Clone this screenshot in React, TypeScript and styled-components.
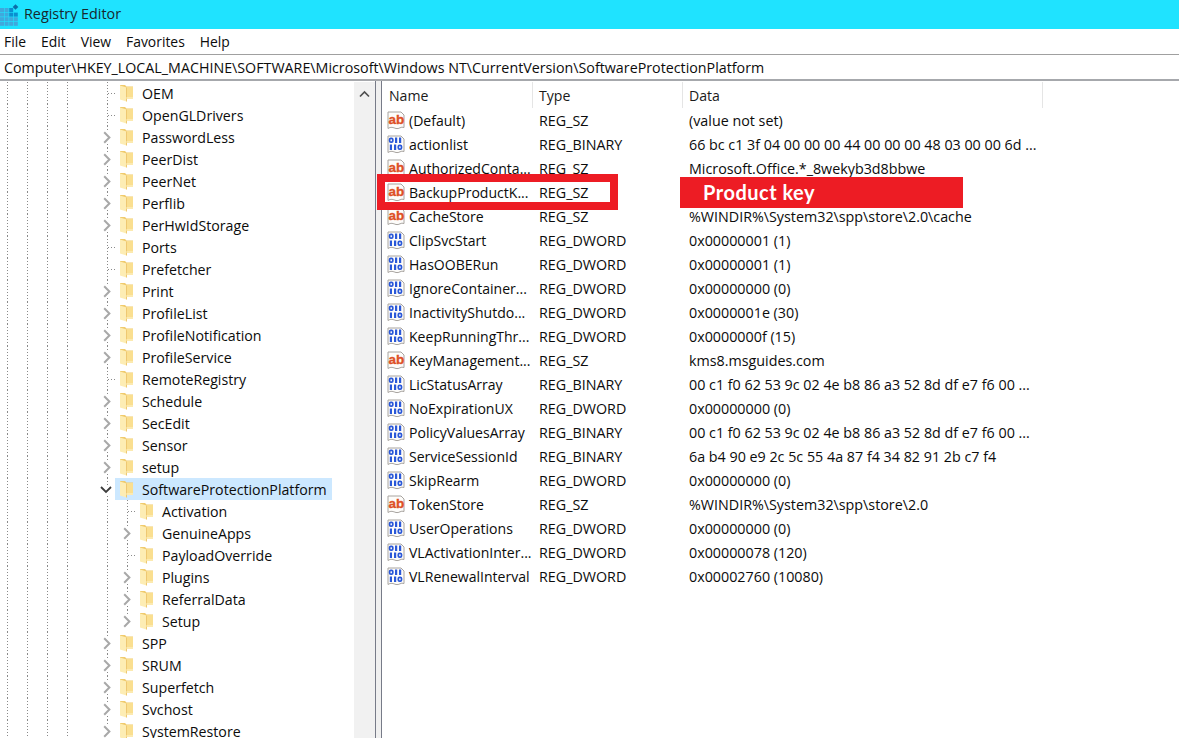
import React from "react";
import styled, { createGlobalStyle } from "styled-components";

const Global = createGlobalStyle`
  html, body { margin: 0; padding: 0; background: #fff; overflow: hidden; }
  * { box-sizing: border-box; }
`;

const FONT = `"Open Sans", "Noto Sans", "Liberation Sans", sans-serif`;

const Win = styled.div`
  width: 1179px; height: 738px; display: flex; flex-direction: column; overflow: hidden;
  font-family: ${FONT}; font-size: 14.3px; color: #0c0c0c; background: #fff; position: relative;
`;
const TitleBar = styled.div`
  height: 29px; flex: none; background: #1fe3ff; display: flex; align-items: center; gap: 5px;
`;
const TitleText = styled.span`font-size: 14.35px; color: #17282e; padding-bottom: 3px;`;
const MenuBar = styled.div`
  height: 26px; flex: none; display: flex; align-items: center; padding-left: 4px; gap: 15px;
  font-size: 13.9px; border-bottom: 1px solid #a0a0a0;
`;
const MenuItem = styled.span``;
const AddressBar = styled.div`
  height: 26px; flex: none; display: flex; align-items: center; padding: 1px 0 0 4px;
  font-size: 14.28px; border-bottom: 2px solid #a6a8ac; white-space: nowrap;
`;
const Panes = styled.div`flex: 1; min-height: 0; display: flex;`;
const TreePane = styled.div`width: 354px; flex: none; overflow: hidden; padding-top: 1px; font-size: 14.2px;`;
const Scrollbar = styled.div`
  width: 21px; flex: none; background: #f1f1f1; display: flex; justify-content: center;
  padding-top: 8px; margin-top: 1px;
`;
const Splitter = styled.div`
  width: 7px; flex: none; background: #f0f0f0; border-left: 1px solid #777b88; border-right: 1px solid #777b88;
`;
const ListPane = styled.div`flex: 1; min-width: 0; position: relative; padding-left: 1px;`;

const TreeRow = styled.div`height: 22px; display: flex; align-items: stretch; padding-left: 7px; white-space: nowrap;`;
const dots = `repeating-linear-gradient(to bottom, #8a8a8a 0 1px, transparent 1px 3px)`;
const hdots = `repeating-linear-gradient(to right, #8a8a8a 0 1px, transparent 1px 3px)`;
const Guide = styled.div`width: 20px; flex: none; background: ${dots} 0 0 / 1px 100% no-repeat;`;
const GuideGap = styled.div`width: 10px; flex: none;`;
const ChildGuide = styled.div`width: 20px; flex: none; background: ${dots} 10px 0 / 1px 100% no-repeat;`;
const Toggle = styled.div<{ $stub: boolean; $last: boolean }>`
  width: 18px; flex: none; display: flex; align-items: center; padding-left: 6px;
  background:
    ${dots} 10px 0 / 1px ${(p) => (p.$last ? "50%" : "100%")} no-repeat
    ${(p) => (p.$stub ? `, ${hdots} 11px 11px / 8px 1px no-repeat` : "")};
`;
const Entry = styled.div<{ $selected: boolean }>`
  display: flex; align-items: center; gap: 9px; padding: 0 5px; flex: none;
  background: ${(p) => (p.$selected ? "#cce8ff" : "transparent")};
`;
const ChevronBox = styled.svg`display: block; background: #fff; flex: none;`;

const Header = styled.div`height: 27px; display: flex; padding-top: 1px;`;
const HeadCell = styled.div<{ $w: number }>`
  width: ${(p) => p.$w}px; flex: none; border-right: 1px solid #e5e5e5; padding-left: 6px;
  display: flex; align-items: center; font-size: 14.1px; padding-top: 1px; color: #1a1a1a;
`;
const DataRow = styled.div`height: 24px; display: flex; align-items: center; white-space: nowrap; padding-top: 1px;`;
const NameCell = styled.div`
  width: 150px; flex: none; display: flex; align-items: center; gap: 4px; padding-left: 4px; font-size: 14.05px;
`;
const TypeCell = styled.div`width: 150px; flex: none; padding-left: 6px;`;
const DataCell = styled.div`flex: 1; padding-left: 6px;`;
const Outline = styled.div`
  position: absolute; left: -5px; top: 93px; width: 241px; height: 36px; border: 8px solid #ed1c24;
`;
const Banner = styled.div`
  position: absolute; left: 298px; top: 96px; width: 283px; height: 31px; background: #ed1c24; color: #fff;
  font-family: "Lato", "Open Sans", sans-serif; font-weight: 700; font-size: 20px; letter-spacing: 0.5px;
  display: flex; align-items: center; padding: 0 0 2px 23px;
`;
const IconText = styled.text`
  font-family: "Liberation Sans", sans-serif; font-weight: 700; font-size: 13.5px;
  stroke: #dd5026; stroke-width: 0.35px;
`;

const Folder = () => (
  <svg width="13" height="18" viewBox="0 0 13 18" style={{ display: "block", flex: "none" }}>
    <path d="M0 1 H5 L6.5 2.5 H13 V15 H0 Z" fill="#f0cb6e" />
    <path d="M6.5 3 H13 V15 H6.5 Z" fill="#fadf90" />
    <path d="M0 1.5 L6.5 3.5 V17.5 L0 15.5 Z" fill="#fdedb4" />
    <path d="M6.5 3.5 V17.5" stroke="#eec872" strokeWidth="1" />
    <path d="M6.5 13 H13 V15 H6.5 Z" fill="#fceab0" />
  </svg>
);

const Chevron = ({ open }: { open?: boolean }) =>
  open ? (
    <ChevronBox width="12" height="9" viewBox="0 0 12 9" style={{ marginLeft: -3 }}>
      <path d="M1 2 L6 7 L11 2" fill="none" stroke="#3c3c3c" strokeWidth="1.8" />
    </ChevronBox>
  ) : (
    <ChevronBox width="8" height="13" viewBox="0 0 8 13">
      <path d="M1.2 1.2 L6.4 6.5 L1.2 11.8" fill="none" stroke="#a8a8a8" strokeWidth="2" />
    </ChevronBox>
  );

const Page = ({ children }: { children: React.ReactNode }) => (
  <svg width="18" height="19" viewBox="0 0 18 19" style={{ display: "block", flex: "none" }}>
    <path d="M1 1 H14 L17 4 V16.5 C14 15 12 18.5 9 17.5 C6 16.5 4 15.5 1 17.5 Z" fill="#fdfcfa" stroke="#a8a4a0" />
    {children}
  </svg>
);
const AbIcon = () => (
  <Page>
    <IconText x="1.6" y="12.5" fill="#dd5026">ab</IconText>
  </Page>
);
const Bit = ({ x, y, one }: { x: number; y: number; one?: boolean }) =>
  one ? (
    <rect x={x + 1} y={y} width="2.2" height="5.5" fill="#2a58d8" />
  ) : (
    <rect x={x + 0.8} y={y + 0.8} width="3.2" height="3.9" rx="1.3" fill="none" stroke="#2a58d8" strokeWidth="1.7" />
  );
const BinIcon = () => (
  <Page>
    <Bit x={1.8} y={2.5} />
    <Bit x={7} y={2.5} one />
    <Bit x={11} y={2.5} one />
    <Bit x={1.8} y={9.5} one />
    <Bit x={6} y={9.5} one />
    <Bit x={10.5} y={9.5} />
  </Page>
);

const RegIcon = () => (
  <svg width="20" height="22" viewBox="0 0 20 22" style={{ display: "block", flex: "none", marginLeft: -1 }}>
    {[0, 1, 2, 3].map((r) =>
      [0, 1, 2, 3].map((c) =>
        r === 0 && c === 3 ? null : (
          <rect key={`${r}${c}`} x={c * 4.6 + 1} y={r * 4.6 + 4} width="4" height="4" fill={c > 1 && r < 2 ? "#0a8fd0" : "#3fa9dd"} />
        ),
      ),
    )}
    <rect x="14.5" y="1" width="4" height="4" fill="#0d6ea8" transform="rotate(45 16.5 3)" />
  </svg>
);

type T = { name: string; kind?: "chev" | "stub" | "open"; child?: boolean; last?: boolean; selected?: boolean };
const tree: T[] = [
  { name: "OEM", kind: "stub" },
  { name: "OpenGLDrivers", kind: "stub" },
  { name: "PasswordLess" },
  { name: "PeerDist" },
  { name: "PeerNet" },
  { name: "Perflib" },
  { name: "PerHwIdStorage" },
  { name: "Ports", kind: "stub" },
  { name: "Prefetcher", kind: "stub" },
  { name: "Print" },
  { name: "ProfileList" },
  { name: "ProfileNotification" },
  { name: "ProfileService" },
  { name: "RemoteRegistry", kind: "stub" },
  { name: "Schedule" },
  { name: "SecEdit" },
  { name: "Sensor" },
  { name: "setup" },
  { name: "SoftwareProtectionPlatform", kind: "open", selected: true },
  { name: "Activation", child: true, kind: "stub" },
  { name: "GenuineApps", child: true },
  { name: "PayloadOverride", child: true, kind: "stub" },
  { name: "Plugins", child: true },
  { name: "ReferralData", child: true },
  { name: "Setup", child: true, last: true },
  { name: "SPP" },
  { name: "SRUM" },
  { name: "Superfetch" },
  { name: "Svchost" },
  { name: "SystemRestore" },
];

const rows: [string, "sz" | "bin", string, string][] = [
  ["(Default)", "sz", "REG_SZ", "(value not set)"],
  ["actionlist", "bin", "REG_BINARY", "66 bc c1 3f 04 00 00 00 44 00 00 00 48 03 00 00 6d ..."],
  ["AuthorizedConta...", "sz", "REG_SZ", "Microsoft.Office.*_8wekyb3d8bbwe"],
  ["BackupProductK...", "sz", "REG_SZ", ""],
  ["CacheStore", "sz", "REG_SZ", "%WINDIR%\\System32\\spp\\store\\2.0\\cache"],
  ["ClipSvcStart", "bin", "REG_DWORD", "0x00000001 (1)"],
  ["HasOOBERun", "bin", "REG_DWORD", "0x00000001 (1)"],
  ["IgnoreContainer...", "bin", "REG_DWORD", "0x00000000 (0)"],
  ["InactivityShutdo...", "bin", "REG_DWORD", "0x0000001e (30)"],
  ["KeepRunningThr...", "bin", "REG_DWORD", "0x0000000f (15)"],
  ["KeyManagement...", "sz", "REG_SZ", "kms8.msguides.com"],
  ["LicStatusArray", "bin", "REG_BINARY", "00 c1 f0 62 53 9c 02 4e b8 86 a3 52 8d df e7 f6 00 ..."],
  ["NoExpirationUX", "bin", "REG_DWORD", "0x00000000 (0)"],
  ["PolicyValuesArray", "bin", "REG_BINARY", "00 c1 f0 62 53 9c 02 4e b8 86 a3 52 8d df e7 f6 00 ..."],
  ["ServiceSessionId", "bin", "REG_BINARY", "6a b4 90 e9 2c 5c 55 4a 87 f4 34 82 91 2b c7 f4"],
  ["SkipRearm", "bin", "REG_DWORD", "0x00000000 (0)"],
  ["TokenStore", "sz", "REG_SZ", "%WINDIR%\\System32\\spp\\store\\2.0"],
  ["UserOperations", "bin", "REG_DWORD", "0x00000000 (0)"],
  ["VLActivationInter...", "bin", "REG_DWORD", "0x00000078 (120)"],
  ["VLRenewalInterval", "bin", "REG_DWORD", "0x00002760 (10080)"],
];

export default function App() {
  return (
    <Win>
      <Global />
      <TitleBar>
        <RegIcon />
        <TitleText>Registry Editor</TitleText>
      </TitleBar>
      <MenuBar>
        {["File", "Edit", "View", "Favorites", "Help"].map((m) => (
          <MenuItem key={m}>{m}</MenuItem>
        ))}
      </MenuBar>
      <AddressBar>Computer\HKEY_LOCAL_MACHINE\SOFTWARE\Microsoft\Windows NT\CurrentVersion\SoftwareProtectionPlatform</AddressBar>
      <Panes>
        <TreePane>
          {tree.map((t) => (
            <TreeRow key={t.name}>
              <Guide />
              <Guide />
              <Guide />
              <Guide />
              <GuideGap />
              {t.child && <ChildGuide />}
              <Toggle $stub={t.kind === "stub"} $last={!!t.last}>
                {t.kind === "open" ? <Chevron open /> : t.kind === "stub" ? null : <Chevron />}
              </Toggle>
              <Entry $selected={!!t.selected}>
                <Folder />
                <span>{t.name}</span>
              </Entry>
            </TreeRow>
          ))}
        </TreePane>
        <Scrollbar>
          <svg width="11" height="8" viewBox="0 0 11 8" style={{ display: "block" }}>
            <path d="M1 6.5 L5.5 2 L10 6.5" fill="none" stroke="#505050" strokeWidth="1.7" />
          </svg>
        </Scrollbar>
        <Splitter />
        <ListPane>
          <Header>
            <HeadCell $w={150}>Name</HeadCell>
            <HeadCell $w={150}>Type</HeadCell>
            <HeadCell $w={360}>Data</HeadCell>
          </Header>
          {rows.map(([n, k, ty, d]) => (
            <DataRow key={n}>
              <NameCell>
                {k === "sz" ? <AbIcon /> : <BinIcon />}
                <span>{n}</span>
              </NameCell>
              <TypeCell>{ty}</TypeCell>
              <DataCell>{d}</DataCell>
            </DataRow>
          ))}
          <Outline />
          <Banner>Product key</Banner>
        </ListPane>
      </Panes>
    </Win>
  );
}
